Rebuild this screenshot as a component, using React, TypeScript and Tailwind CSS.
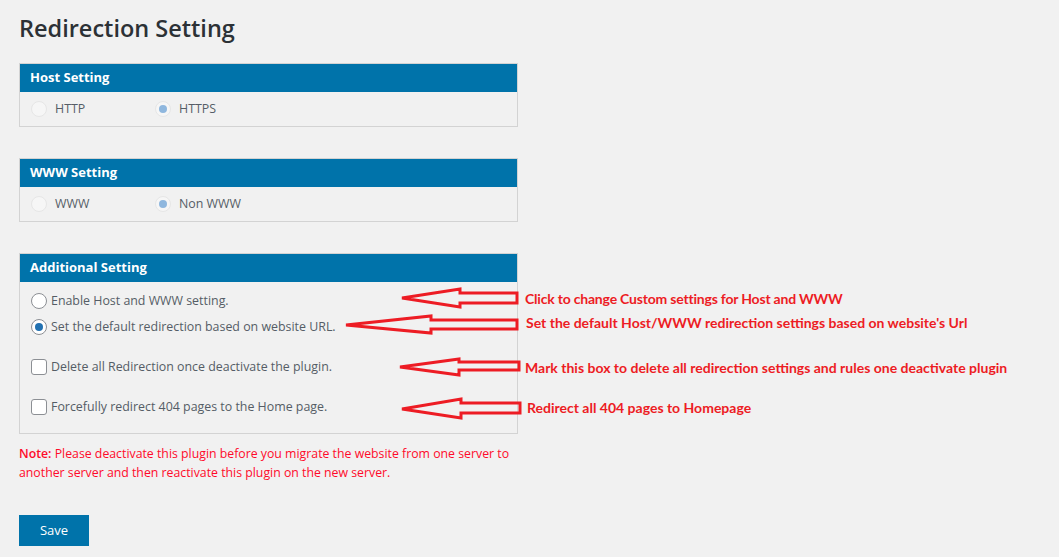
import React from 'react';

const font = "font-['Open_Sans',sans-serif]";

function Radio({ checked, disabled }: { checked?: boolean; disabled?: boolean }) {
  if (disabled) {
    return (
      <span className="w-[16px] h-[16px] rounded-full border border-[#e6e6e6] bg-[#f6f6f6] flex items-center justify-center shrink-0">
        {checked && <span className="w-[8px] h-[8px] rounded-full bg-[#8fb7de]" />}
      </span>
    );
  }
  return (
    <span className="w-[16px] h-[16px] rounded-full border border-[#8c8f94] bg-white flex items-center justify-center shrink-0">
      {checked && <span className="w-[8px] h-[8px] rounded-full bg-[#2271b1]" />}
    </span>
  );
}

function Checkbox() {
  return <span className="w-[16px] h-[16px] rounded-[3px] border border-[#8c8f94] bg-white shrink-0" />;
}

function Panel({ title, children }: { title: string; children: React.ReactNode }) {
  return (
    <div className="border border-[#d3d3d3]">
      <div className="h-[28px] bg-[#0073aa] px-[10px] flex items-center text-white text-[13px] font-bold">
        {title}
      </div>
      {children}
    </div>
  );
}

function Arrow({ points }: { points: string }) {
  return (
    <polygon points={points} fill="none" stroke="#ed1c24" strokeWidth="3" strokeLinejoin="miter" />
  );
}

export default function App() {
  return (
    <div className={`relative min-h-screen bg-[#f1f1f1] text-[#555d66] ${font}`}>
      <div className="w-[518px] pl-[19px] pt-[13px]">
        <h1 className="text-[23.5px] font-semibold text-[#2c3136] leading-[30px]">Redirection Setting</h1>

        <div className="mt-[20px]">
          <Panel title="Host Setting">
            <div className="h-[34px] flex items-center pl-[11px] text-[12.4px]">
              <label className="flex items-center gap-[8px] w-[124px]">
                <Radio disabled />
                <span>HTTP</span>
              </label>
              <label className="flex items-center gap-[8px]">
                <Radio disabled checked />
                <span>HTTPS</span>
              </label>
            </div>
          </Panel>
        </div>

        <div className="mt-[31px]">
          <Panel title="WWW Setting">
            <div className="h-[34px] flex items-center pl-[11px] text-[12.4px]">
              <label className="flex items-center gap-[8px] w-[124px]">
                <Radio disabled />
                <span>WWW</span>
              </label>
              <label className="flex items-center gap-[8px]">
                <Radio disabled checked />
                <span>Non WWW</span>
              </label>
            </div>
          </Panel>
        </div>

        <div className="mt-[31px]">
          <Panel title="Additional Setting">
            <div className="pl-[11px] pt-[6px] pb-[13px] text-[12.4px]">
              <label className="h-[26px] flex items-center gap-[4px]">
                <Radio />
                <span>Enable Host and WWW setting.</span>
              </label>
              <label className="h-[26px] flex items-center gap-[4px]">
                <Radio checked />
                <span>Set the default redirection based on website URL.</span>
              </label>
              <label className="h-[26px] mt-[14px] flex items-center gap-[4px]">
                <Checkbox />
                <span>Delete all Redirection once deactivate the plugin.</span>
              </label>
              <label className="h-[26px] mt-[14px] flex items-center gap-[4px]">
                <Checkbox />
                <span>Forcefully redirect 404 pages to the Home page.</span>
              </label>
            </div>
          </Panel>
        </div>

        <p className="mt-[10px] text-[12.3px] leading-[19px] text-[#ff0a2a]">
          <span className="font-semibold">Note:</span> Please deactivate this plugin before you migrate the website from one server to{' '}
          another server and then reactivate this plugin on the new server.
        </p>

        <button className="mt-[33px] w-[70px] h-[31px] bg-[#0073aa] text-white text-[13px]">Save</button>
      </div>

      <svg className="absolute left-0 top-0 pointer-events-none" width="1059" height="557">
        <Arrow points="402,298 460,289 460,293 517,293 517,303 460,303 460,307" />
        <Arrow points="346,325 431,316 431,320 517,320 517,329 431,329 431,333" />
        <Arrow points="400,367 459,359 459,362 519,362 519,370 459,370 459,375" />
        <Arrow points="402,409 461,399 461,403 520,403 520,413 461,413 461,418" />
      </svg>

      <div className="absolute left-[525px] top-0 font-['Lato',sans-serif] font-bold text-[14px] text-[#ed1c24] leading-[18px]">
        <div className="absolute top-[290px] whitespace-nowrap tracking-[-0.2px]">Click to change Custom settings for Host and WWW</div>
        <div className="absolute top-[314px] left-[1px] whitespace-nowrap">Set the default Host/WWW redirection settings based on website's Url</div>
        <div className="absolute top-[359px] whitespace-nowrap">Mark this box to delete all redirection settings and rules one deactivate plugin</div>
        <div className="absolute top-[399px] left-[2px] whitespace-nowrap">Redirect all 404 pages to Homepage</div>
      </div>
    </div>
  );
}
